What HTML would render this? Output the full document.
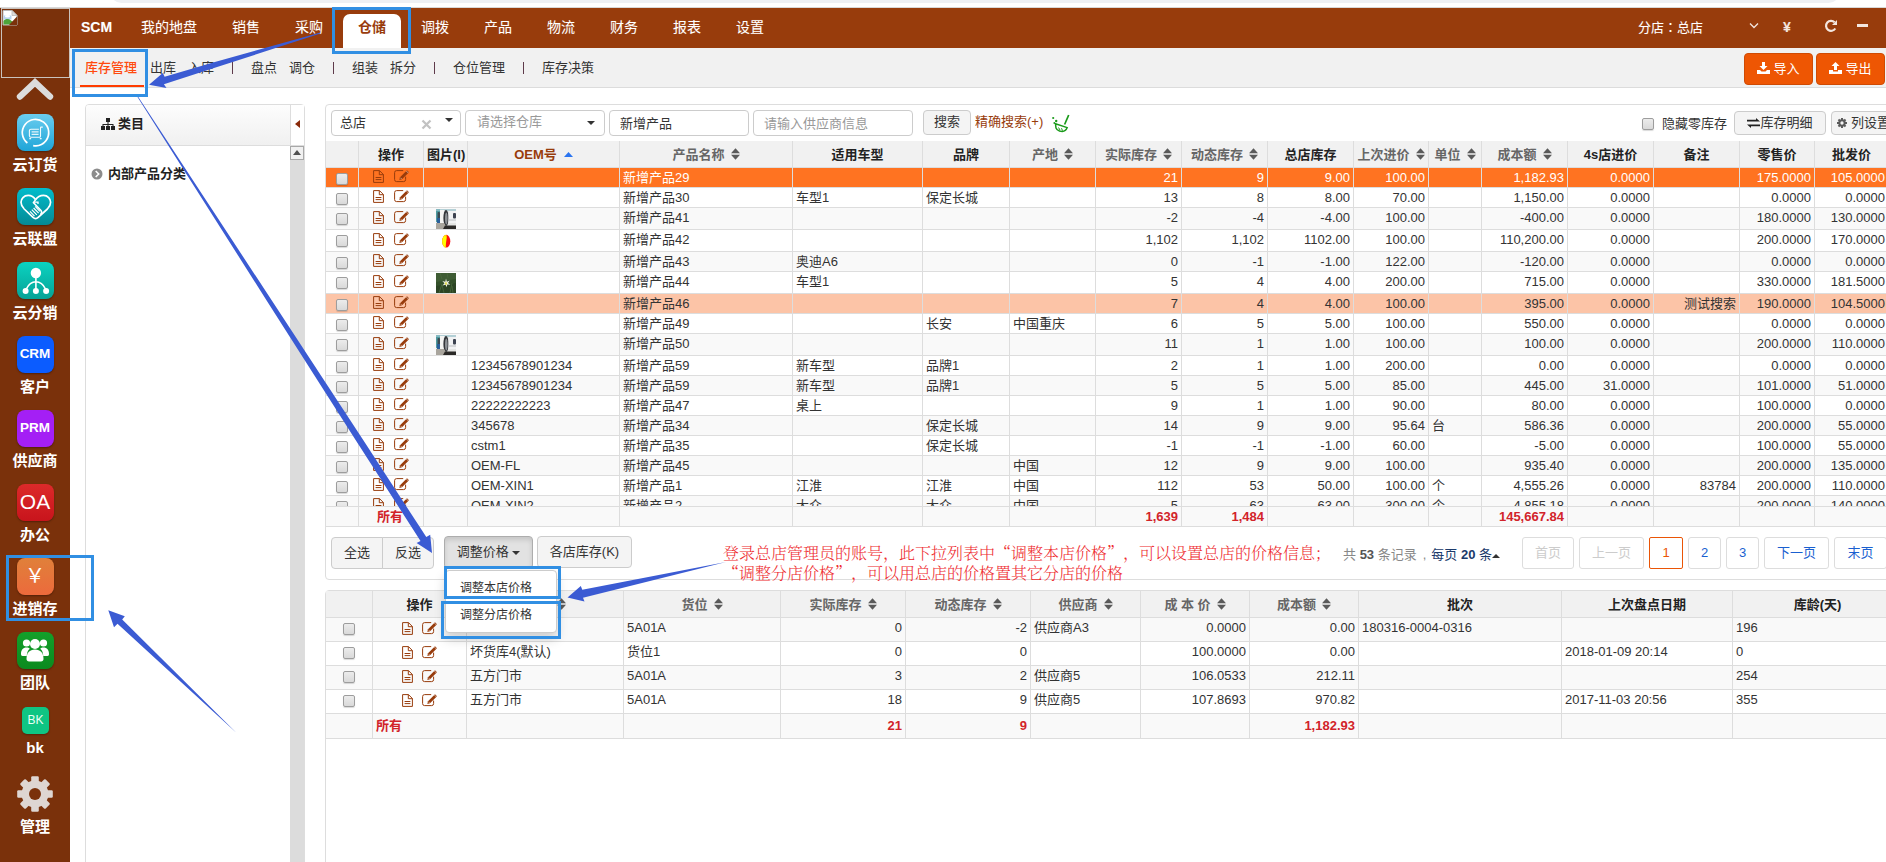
<!DOCTYPE html><html lang="zh-CN"><head><meta charset="utf-8"><title>库存管理</title><style>

*{box-sizing:border-box;}
html,body{margin:0;padding:0;}
body{width:1886px;height:862px;overflow:hidden;background:#fff;position:relative;
 font-family:"Liberation Sans","Noto Sans CJK SC",sans-serif;font-size:13px;color:#333;}
.abs{position:absolute;}
.tc{font-family:"Liberation Sans","Noto Sans CJK TC",sans-serif;}
#topstrip{left:0;top:0;width:1886px;height:8px;background:#fff;}
#addr{left:110px;top:-20px;width:1730px;height:23px;border-radius:12px;background:#eef0f4;}
#topline{left:0;top:7px;width:1886px;height:1px;background:#d8d8d8;}
#side{left:0;top:8px;width:70px;height:854px;background:#7a310b;}
#logo{left:1px;top:8px;width:69px;height:70px;border:1px solid #c9c2bd;background:#7a310b;}
.slabel{left:0;width:70px;text-align:center;color:#fff;font-weight:bold;font-size:15px;line-height:18px;}
.sicon{left:17px;width:37px;height:37px;border-radius:8px;box-shadow:0 1px 2px rgba(0,0,0,.35);overflow:hidden;}
.sicon span{display:block;width:36px;text-align:center;color:#fff;font-weight:bold;}
#nav{left:70px;top:8px;width:1816px;height:40px;background:#983c0c;}
.nv{top:8px;height:40px;line-height:39px;color:#fff;font-size:14px;white-space:nowrap;text-shadow:0 0 1px rgba(255,255,255,.25);}
#navact{left:343px;top:14px;width:58px;height:34px;background:#fff;border-radius:7px 7px 0 0;}
#subnav{left:70px;top:48px;width:1816px;height:40px;background:#f1f1f1;border-bottom:1px solid #dcdcdc;}
.sn{top:48px;height:40px;line-height:40px;font-size:13px;color:#333;white-space:nowrap;}
.sep{color:#7a2a4a;}
.obtn{top:53px;height:32px;width:69px;background:#ee5603;border:1px solid #cf4b04;border-radius:4px;color:#fff;font-size:13px;line-height:30px;text-align:center;white-space:nowrap;}
.bluebox{border:3px solid #318fe3;}
/* left panel */
#tree{left:85px;top:104px;width:220px;height:770px;border:1px solid #ddd;border-radius:4px 4px 0 0;background:#fff;}
#treehd{left:86px;top:105px;width:205px;height:41px;background:linear-gradient(#fdfdfd,#f0f0f0);border-bottom:1px solid #ddd;border-radius:3px 0 0 0;}
#treecol{left:290px;top:105px;width:14px;height:41px;background:#fff;border-left:1px solid #ddd;border-bottom:1px solid #ddd;}
#sbar{left:290px;top:146px;width:14px;height:720px;background:#dcdcdc;}
#sbup{left:290px;top:146px;width:14px;height:14px;background:#f1f1f1;border:1px solid #a8a8a8;}
/* panels */
#p1{left:325px;top:104px;width:1580px;height:476px;border:1px solid #ddd;border-radius:4px;background:#fff;}
#p2{left:325px;top:590px;width:1580px;height:290px;border:1px solid #ddd;border-radius:4px 0 0 0;background:#fff;}
.inp{top:110px;height:26px;border:1px solid #ccc;border-radius:4px;background:#fff;font-size:13px;line-height:24px;padding-left:8px;white-space:nowrap;overflow:hidden;}
.ph{color:#999;}
.gbtn{border:1px solid #ccc;border-radius:4px;background:#f4f4f4;font-size:13px;text-align:center;white-space:nowrap;color:#333;}
.caret{display:inline-block;width:0;height:0;border-left:4px solid transparent;border-right:4px solid transparent;border-top:4px solid #333;vertical-align:middle;}
/* grid */
table.g{border-collapse:separate;border-spacing:0;table-layout:fixed;position:absolute;}
table.g td,table.g th{border-right:1px solid #ddd;border-bottom:1px solid #ddd;padding:0 3px;overflow:hidden;white-space:nowrap;font-size:13px;line-height:19px;vertical-align:middle;}
table.g td{vertical-align:top;}
table.g td.m{vertical-align:middle;}
table.b tr.ft td{padding-top:2px;}
table.g th{background:#f1f1f1;font-weight:bold;color:#222;text-align:center;}
table.g th.s{color:#666;}
table.g td.r{text-align:right;}
table.g td.c{text-align:center;}
table.g tr.odd td{background:#fff;}
table.g tr.even td{background:#f9f9f9;}
table.g tr.sel td{background:#ff7321;color:#fff;}
table.g tr.hov td{background:#fcc4a7;}
table.g tr.ft td{background:#f9f9f9;color:#d2232a;font-weight:bold;}
.cb{display:inline-block;width:12px;height:12px;border:1px solid #9d9d9d;border-radius:2px;background:linear-gradient(#ececec,#d9d9d9);box-shadow:0 1px 1px rgba(0,0,0,.15);vertical-align:middle;}
.si{display:inline-block;width:9px;height:12px;vertical-align:-1.500px;margin-left:6px;}
.ic{display:inline-block;vertical-align:middle;}
.pg{top:537px;height:32px;border:1px solid #ddd;border-radius:3px;background:#fff;font-size:13px;line-height:30px;text-align:center;color:#1a5fd0;white-space:nowrap;}
.pg.dis{color:#ccc;}
.pg.cur{border-color:#ea5506;color:#ea5506;border-radius:2px;}
.note{color:#ee2a2e;font-family:"Liberation Serif","Noto Serif CJK SC",serif;font-size:16px;font-weight:300;white-space:nowrap;line-height:20px;text-spacing-trim:space-all;}
.note i{font-style:normal;font-family:"Noto Serif CJK SC",serif;}

</style></head><body>
<div id="topstrip" class="abs"></div><div id="addr" class="abs"></div><div id="topline" class="abs"></div>
<div id="side" class="abs"></div>
<div id="logo" class="abs"></div>
<svg class="abs" style="left:2px;top:10px" width="16" height="16" viewBox="0 0 16 16">
<path d="M1 0.5h9l5 5v9.5h-14z" fill="#fff" stroke="#b8b8b8" stroke-width="1"/>
<path d="M10 0.5v5h5z" fill="#dcdcdc" stroke="#b8b8b8" stroke-width=".8"/>
<path d="M1.5 5.5h8v4h-8z" fill="#b9d4f0"/>
<ellipse cx="5.5" cy="6.3" rx="2.6" ry="1.2" fill="#fff"/>
<path d="M1.5 14.5v-3.5c2-2.4 5-2.6 7.5-.6l5.5 4.1z" fill="#4da43a"/>
<path d="M7 15 L15 6.5 V15z" fill="#7a310b"/>
</svg>
<svg class="abs" style="left:14px;top:76px" width="42" height="28" viewBox="0 0 42 28">
<path d="M6 20.5 L21 6.5 L36 20.5" fill="none" stroke="#dcdcdc" stroke-width="6.4" stroke-linecap="round" stroke-linejoin="miter"/></svg>
<div class="abs sicon" style="top:114px;background:linear-gradient(#6bcdef,#1fa5d8)">
<svg width="37" height="37" viewBox="0 0 37 37"><circle cx="18.500" cy="18.600" r="13.200" fill="none" stroke="#fff" stroke-width="1.700" stroke-dasharray="76 7" transform="rotate(128 18.500 18.600)"/>
<path d="M25.800 13.100h-1.600c-.5 0-.7.300-.7.800v8.300c0 .6-.4 1-1 1h-8.600c-.9 0-1.500-.6-1.500-1.500v-4.900c0-.9.600-1.500 1.500-1.500h8" fill="none" stroke="#fff" stroke-width="1.100" opacity=".92"/>
<path d="M14.600 17.800h7M14.600 20.400h7" stroke="#fff" stroke-width="1.300" opacity=".85"/><rect x="12.300" y="24" width="1.800" height="1.300" fill="#fff" opacity=".9"/><rect x="22.800" y="24" width="1.800" height="1.300" fill="#fff" opacity=".9"/></svg></div>
<div class="abs slabel" style="top:156px">云订货</div>
<div class="abs sicon" style="top:188px;background:linear-gradient(#02bccb,#058995)">
<svg width="37" height="37" viewBox="0 0 37 37"><path d="M18.600 11.800C16.600 8.600 13.800 7.400 11.200 7.400C6.800 7.400 4 10.800 4 14.300C4 17.500 5.600 19.400 7.200 21L16 29.400C17.500 30.800 19.700 30.800 21.200 29.400L30.400 21C32 19.400 33.600 17.500 33.600 14.300C33.600 10.800 30.800 7.400 26.500 7.400C23.600 7.400 20.600 8.600 18.600 11.800" fill="none" stroke="#fff" stroke-width="1.700" stroke-linejoin="round"/>
<path d="M18.600 11.800L16.400 14.600L24 22.500C25 23.800 24.600 25.500 23.400 26.600" fill="none" stroke="#fff" stroke-width="1.500"/><path d="M17 14.200h4v1.800" fill="none" stroke="#fff" stroke-width="1.300"/>
<path d="M13 23.400l4.500 4.800M14.800 21.600l5 5.200M16.600 20l5 5.200M18.200 18.300l4.700 5" stroke="#fff" stroke-width="1.200"/></svg></div>
<div class="abs slabel" style="top:230px">云联盟</div>
<div class="abs sicon" style="top:262px;background:linear-gradient(#0bd3c1,#05a296)">
<svg width="37" height="37" viewBox="0 0 37 37"><circle cx="18.900" cy="11" r="5.200" fill="#fff"/><path d="M18.900 15v12M9.300 27C11.800 21.600 15.500 19.700 18.900 19.700C22.300 19.700 26 21.600 28.500 27" fill="none" stroke="#fff" stroke-width="1.600"/>
<circle cx="8.600" cy="29" r="3" fill="#fff"/><circle cx="18.900" cy="29" r="3" fill="#fff"/><circle cx="29.100" cy="29" r="3" fill="#fff"/></svg></div>
<div class="abs slabel" style="top:304px">云分销</div>
<div class="abs sicon" style="top:336px;background:#0b5cff"><span style="font-size:13.5px;line-height:36px;letter-spacing:0">CRM</span></div>
<div class="abs slabel" style="top:378px">客户</div>
<div class="abs sicon" style="top:410px;background:#a41ff5"><span style="font-size:13.5px;line-height:36px">PRM</span></div>
<div class="abs slabel" style="top:452px">供应商</div>
<div class="abs sicon" style="top:484px;background:linear-gradient(#dc2a2a,#c8141c)"><span style="font-size:21px;line-height:36px;font-weight:normal">OA</span></div>
<div class="abs slabel" style="top:526px">办公</div>
<div class="abs sicon" style="top:558px;background:linear-gradient(#e0803a,#ec6a3c)"><span style="font-size:20px;line-height:36px;font-weight:normal">￥</span></div>
<div class="abs slabel" style="top:600px">进销存</div>
<div class="abs sicon" style="top:632px;background:linear-gradient(#13a02a,#0b8a1f)">
<svg width="36" height="36" viewBox="0 0 36 36" fill="#fff"><circle cx="9.500" cy="11" r="3.600"/><circle cx="26.500" cy="11" r="3.600"/><circle cx="18" cy="12" r="5"/>
<path d="M4 22c0-4 2-6.500 5.500-6.500 1.500 0 2.500.5 3.300 1.200-2 1.500-3 4-3 7.300H5.500C4.500 24 4 23.200 4 22z"/><path d="M32 22c0-4-2-6.500-5.500-6.500-1.500 0-2.500.5-3.300 1.200 2 1.500 3 4 3 7.300h4.300c1 0 1.500-.8 1.500-2z"/>
<path d="M9.500 27c0-6 3-9.500 8.500-9.500s8.500 3.500 8.500 9.500c0 1.500-1 2.500-2.500 2.500H12c-1.500 0-2.500-1-2.500-2.500z"/></svg></div>
<div class="abs slabel" style="top:674px">团队</div>
<div class="abs" style="left:22px;top:707px;width:27px;height:27px;border-radius:5px;background:#0fc583;color:#eafff6;font-size:12px;line-height:27px;text-align:center;box-shadow:0 1px 2px rgba(0,0,0,.3)">BK</div>
<div class="abs slabel" style="top:739px">bk</div>
<svg class="abs" style="left:17px;top:775px" width="36" height="38" viewBox="0 0 36 38">
<g transform="translate(18 19)" fill="#ded6d2"><circle r="13.400"/>
<rect x="-3.800" y="-17.800" width="7.600" height="8" rx="1.200" transform="rotate(0)"/><rect x="-3.800" y="-17.800" width="7.600" height="8" rx="1.200" transform="rotate(45)"/><rect x="-3.800" y="-17.800" width="7.600" height="8" rx="1.200" transform="rotate(90)"/><rect x="-3.800" y="-17.800" width="7.600" height="8" rx="1.200" transform="rotate(135)"/><rect x="-3.800" y="-17.800" width="7.600" height="8" rx="1.200" transform="rotate(180)"/><rect x="-3.800" y="-17.800" width="7.600" height="8" rx="1.200" transform="rotate(225)"/><rect x="-3.800" y="-17.800" width="7.600" height="8" rx="1.200" transform="rotate(270)"/><rect x="-3.800" y="-17.800" width="7.600" height="8" rx="1.200" transform="rotate(315)"/>
<circle r="6" fill="#7a310b"/></g></svg>
<div class="abs slabel" style="top:818px">管理</div>
<div id="nav" class="abs"></div>
<div id="navact" class="abs"></div>
<div class="abs nv" style="left:81px;font-weight:bold;font-size:14px;">SCM</div>
<div class="abs nv" style="left:141px;">我的地盘</div>
<div class="abs nv" style="left:232px;">销售</div>
<div class="abs nv" style="left:295px;">采购</div>
<div class="abs nv" style="left:421px;">调拨</div>
<div class="abs nv" style="left:484px;">产品</div>
<div class="abs nv" style="left:547px;">物流</div>
<div class="abs nv" style="left:610px;">财务</div>
<div class="abs nv" style="left:673px;">报表</div>
<div class="abs nv" style="left:736px;">设置</div>
<div class="abs nv" style="left:358px;color:#983c0c;text-shadow:none;font-weight:bold">仓储</div>
<div class="abs nv" style="left:1638px;font-size:13px">分店<span class="tc" lang="zh-TW">：</span>总店</div>
<svg class="abs" style="left:1749px;top:22px" width="10" height="8" viewBox="0 0 10 8"><path d="M1 1.500l4 4 4-4" fill="none" stroke="#f3e6df" stroke-width="1.300"/></svg>
<div class="abs nv" style="left:1783px;font-size:14px;font-weight:bold;color:#f3e6df">¥</div>
<svg class="abs" style="left:1824px;top:19px" width="14" height="14" viewBox="0 0 14 14"><path d="M11.300 9.500A5 5 0 1 1 10.600 3.300" fill="none" stroke="#f3e6df" stroke-width="2.200"/><path d="M13 1v5H8z" fill="#f3e6df"/></svg>
<div class="abs" style="left:1857px;top:24px;width:11px;height:3px;background:#f3e6df"></div>
<div id="subnav" class="abs"></div>
<div class="abs sn" style="left:85px;color:#ff4a0e;font-weight:500">库存管理</div>
<div class="abs" style="left:80px;top:85px;width:64px;height:2px;background:#ff3c00"></div>
<div class="abs sn" style="left:150px">出库</div>
<div class="abs sn" style="left:188px">入库</div>
<div class="abs sn" style="left:251px">盘点</div>
<div class="abs sn" style="left:289px">调仓</div>
<div class="abs sn" style="left:352px">组装</div>
<div class="abs sn" style="left:390px">拆分</div>
<div class="abs sn" style="left:453px">仓位管理</div>
<div class="abs sn" style="left:542px">库存决策</div>
<div class="abs" style="left:232px;top:62px;width:1px;height:12px;background:#5e3a4a"></div>
<div class="abs" style="left:333px;top:62px;width:1px;height:12px;background:#5e3a4a"></div>
<div class="abs" style="left:434px;top:62px;width:1px;height:12px;background:#5e3a4a"></div>
<div class="abs" style="left:523px;top:62px;width:1px;height:12px;background:#5e3a4a"></div>
<div class="abs obtn" style="left:1744px"><svg class="ic" width="13" height="12" viewBox="0 0 13 12" style="margin-right:3px;vertical-align:-1px"><path d="M5 0h3v4h2.500L6.500 8 2.500 4H5z" fill="#fff"/><path d="M0 8h3l1.500 1.500h4L10 8h3v4H0z" fill="#fff"/></svg>导入</div>
<div class="abs obtn" style="left:1816px"><svg class="ic" width="13" height="12" viewBox="0 0 13 12" style="margin-right:3px;vertical-align:-1px"><path d="M5 8h3V4h2.500L6.500 0 2.500 4H5z" fill="#fff"/><path d="M0 8h4v1.500h5V8h4v4H0z" fill="#fff"/></svg>导出</div>
<div id="tree" class="abs"></div>
<div id="treehd" class="abs"></div>
<div id="treecol" class="abs"></div>
<div class="abs" style="left:295px;top:120px;width:0;height:0;border-top:4px solid transparent;border-bottom:4px solid transparent;border-right:5px solid #8a2a0a"></div>
<svg class="abs" style="left:101px;top:118px" width="14" height="12" viewBox="0 0 14 12" fill="#222"><rect x="5" y="0" width="4" height="4"/><rect x="0" y="8" width="4" height="4"/><rect x="5" y="8" width="4" height="4"/><rect x="10" y="8" width="4" height="4"/><path d="M6.500 4h1v4h-1zM1.500 6h11v1h-11zM1.500 6h1v2h-1zM11.500 6h1v2h-1z"/></svg>
<div class="abs" style="left:118px;top:114px;line-height:20px;font-weight:bold;font-size:13px;color:#222">类目</div>
<div id="sbar" class="abs"></div><div id="sbup" class="abs"></div>
<div class="abs" style="left:293px;top:150px;width:0;height:0;border-left:4px solid transparent;border-right:4px solid transparent;border-bottom:5px solid #505050"></div>
<svg class="abs" style="left:91px;top:168px" width="12" height="12" viewBox="0 0 12 12"><circle cx="6" cy="6" r="5.500" fill="#8c8c8c"/><path d="M4.700 3l3 3-3 3" fill="none" stroke="#fff" stroke-width="1.600"/></svg>
<div class="abs" style="left:108px;top:164px;line-height:20px;font-weight:bold;font-size:13px;color:#222;white-space:nowrap">内部产品分类</div>
<div id="p1" class="abs"></div>
<div class="abs inp" style="left:331px;width:130px">总店</div>
<svg class="abs" style="left:421px;top:119px" width="11" height="11" viewBox="0 0 11 11"><path d="M1.500 1.500l8 8M9.500 1.500l-8 8" stroke="#c2c2c2" stroke-width="2.300"/></svg>
<div class="abs caret" style="left:445px;top:118px"></div>
<div class="abs inp ph" style="left:465px;width:140px;padding-left:11px;line-height:22px">请选择仓库</div>
<div class="abs caret" style="left:587px;top:121px"></div>
<div class="abs inp" style="left:609px;width:140px;padding-left:10px;line-height:26px">新增产品</div>
<div class="abs inp ph" style="left:753px;width:160px;padding-left:10px;line-height:26px">请输入供应商信息</div>
<div class="abs gbtn" style="left:923px;top:110px;width:48px;height:25px;line-height:22px">搜索</div>
<div class="abs" style="left:975px;top:111px;line-height:22px;color:#983c0c;font-size:13px;white-space:nowrap">精确搜索(+)</div>
<svg class="abs" style="left:1051px;top:113px" width="20" height="20" viewBox="0 0 20 20"><path d="M17.700 2L13.600 11.500" stroke="#1a9a1a" stroke-width="1.700" fill="none"/>
<path d="M4.500 10.800L16.200 14.600C15 17.800 11.800 19 8.500 18C6.800 17.400 5.500 16.500 5 15z" fill="none" stroke="#1a9a1a" stroke-width="1.500"/><path d="M7.500 14.500l1.500 2.500M10.500 15.200l1 2.500" stroke="#1a9a1a" stroke-width="1"/>
<circle cx="2.200" cy="5" r="1.100" fill="#1a9a1a"/><circle cx="5.200" cy="8" r="1.200" fill="#1a9a1a"/><circle cx="3.300" cy="10" r=".9" fill="#1a9a1a"/></svg>
<span class="abs cb" style="left:1642px;top:118px"></span>
<div class="abs" style="left:1662px;top:113px;line-height:22px;font-size:13px;color:#333;white-space:nowrap">隐藏零库存</div>
<div class="abs gbtn" style="left:1734px;top:111px;width:92px;height:24px;line-height:21px"><svg class="ic" width="13" height="10" viewBox="0 0 13 10" style="vertical-align:-0.500px"><path d="M0 1.800h9V0l4 3.600H0zM13 8.200H4V10L0 6.400h13z" fill="#222"/></svg>库存明细</div>
<div class="abs gbtn" style="left:1831px;top:111px;width:70px;height:24px;line-height:21px;text-align:left;padding-left:4px"><svg class="ic" width="10" height="10" viewBox="0 0 12 12" style="vertical-align:-1px;margin-right:4px;margin-left:1px"><g transform="translate(6 6)" fill="#5a5a5a"><circle r="4.400"/><rect x="-1.200" y="-6" width="2.400" height="12"/><rect x="-1.200" y="-6" width="2.400" height="12" transform="rotate(45)"/><rect x="-1.200" y="-6" width="2.400" height="12" transform="rotate(90)"/><rect x="-1.200" y="-6" width="2.400" height="12" transform="rotate(135)"/><circle r="2" fill="#f4f4f4"/></g></svg>列设置</div>
<table class="g" style="left:326px;top:141px;width:1563px"><colgroup><col style="width:33px"><col style="width:65px"><col style="width:44px"><col style="width:152px"><col style="width:173px"><col style="width:130px"><col style="width:87px"><col style="width:86px"><col style="width:86px"><col style="width:86px"><col style="width:86px"><col style="width:75px"><col style="width:53px"><col style="width:86px"><col style="width:86px"><col style="width:86px"><col style="width:75px"><col style="width:74px"></colgroup><tr style="height:27px">
<th></th>
<th>操作</th>
<th>图片(I)</th>
<th style="color:#983c0c">OEM号<svg class="si" style="width:9px;height:5px;vertical-align:2px;margin-left:7px" viewBox="0 0 9 5"><path d="M4.500 0L9 5H0z" fill="#2a74f0"/></svg></th>
<th class="s">产品名称<svg class="si" viewBox="0 0 9 12"><path d="M4.500 0.300L9 5.200H0z" fill="#5a5a5a"/><path d="M4.500 11.700L9 6.800H0z" fill="#5a5a5a"/></svg></th>
<th>适用车型</th>
<th>品牌</th>
<th class="s">产地<svg class="si" viewBox="0 0 9 12"><path d="M4.500 0.300L9 5.200H0z" fill="#5a5a5a"/><path d="M4.500 11.700L9 6.800H0z" fill="#5a5a5a"/></svg></th>
<th class="s">实际库存<svg class="si" viewBox="0 0 9 12"><path d="M4.500 0.300L9 5.200H0z" fill="#5a5a5a"/><path d="M4.500 11.700L9 6.800H0z" fill="#5a5a5a"/></svg></th>
<th class="s">动态库存<svg class="si" viewBox="0 0 9 12"><path d="M4.500 0.300L9 5.200H0z" fill="#5a5a5a"/><path d="M4.500 11.700L9 6.800H0z" fill="#5a5a5a"/></svg></th>
<th>总店库存</th>
<th class="s">上次进价<svg class="si" viewBox="0 0 9 12"><path d="M4.500 0.300L9 5.200H0z" fill="#5a5a5a"/><path d="M4.500 11.700L9 6.800H0z" fill="#5a5a5a"/></svg></th>
<th class="s">单位<svg class="si" viewBox="0 0 9 12"><path d="M4.500 0.300L9 5.200H0z" fill="#5a5a5a"/><path d="M4.500 11.700L9 6.800H0z" fill="#5a5a5a"/></svg></th>
<th class="s">成本额<svg class="si" viewBox="0 0 9 12"><path d="M4.500 0.300L9 5.200H0z" fill="#5a5a5a"/><path d="M4.500 11.700L9 6.800H0z" fill="#5a5a5a"/></svg></th>
<th>4s店进价</th>
<th>备注</th>
<th>零售价</th>
<th>批发价</th>
</tr></table>
<div class="abs" style="left:326px;top:168px;width:1560px;height:338px;overflow:hidden">
<table class="g" style="left:0;top:0;width:1563px"><colgroup><col style="width:33px"><col style="width:65px"><col style="width:44px"><col style="width:152px"><col style="width:173px"><col style="width:130px"><col style="width:87px"><col style="width:86px"><col style="width:86px"><col style="width:86px"><col style="width:86px"><col style="width:75px"><col style="width:53px"><col style="width:86px"><col style="width:86px"><col style="width:86px"><col style="width:75px"><col style="width:74px"></colgroup>
<tr class="sel" style="height:20px">
<td class="c" style="padding:5px 0 0 0;line-height:0"><span class="cb" style="vertical-align:top"></span></td>
<td class="m" style="padding:0 0 0 14px;line-height:0"><span style="position:relative;top:-1px"><svg class="ic" width="11" height="13" viewBox="0 0 11 13"><path d="M0.600 0.600h5.900l3.900 3.900v7.900h-9.800z" fill="none" stroke="#983c0c" stroke-width="1"/><path d="M6.300 0.600v4.100h4.100" fill="none" stroke="#983c0c" stroke-width="1"/><path d="M2.600 7.500h5.800M2.600 9.600h5.800" stroke="#983c0c" stroke-width="1"/></svg><span style="display:inline-block;width:10px"></span><svg class="ic" width="16" height="13" viewBox="0 0 16 13"><path d="M11.600 6.600v3a2 2 0 0 1-2 2h-7a2 2 0 0 1-2-2v-7a2 2 0 0 1 2-2h6.600" fill="none" stroke="#983c0c" stroke-width="1"/><path d="M5.300 10l.7-2.700 7-7 2 2-7 7z" fill="#983c0c"/><path d="M6.400 7.700l1.500 1.500" stroke="#fff" stroke-width=".5"/><path d="M12.300 1l2 2" stroke="#fff" stroke-width=".5"/></svg></span></td>
<td class="c m" style="padding:0;line-height:0"></td>
<td></td><td>新增产品29</td><td></td><td></td><td></td>
<td class="r">21</td>
<td class="r">9</td>
<td class="r">9.00</td>
<td class="r">100.00</td>
<td></td>
<td class="r">1,182.93</td>
<td class="r">0.0000</td>
<td class="r"></td>
<td class="r">175.0000</td>
<td class="r">105.0000</td>
</tr>
<tr class="odd" style="height:20px">
<td class="c" style="padding:5px 0 0 0;line-height:0"><span class="cb" style="vertical-align:top"></span></td>
<td class="m" style="padding:0 0 0 14px;line-height:0"><span style="position:relative;top:-1px"><svg class="ic" width="11" height="13" viewBox="0 0 11 13"><path d="M0.600 0.600h5.900l3.900 3.900v7.900h-9.800z" fill="none" stroke="#983c0c" stroke-width="1"/><path d="M6.300 0.600v4.100h4.100" fill="none" stroke="#983c0c" stroke-width="1"/><path d="M2.600 7.500h5.800M2.600 9.600h5.800" stroke="#983c0c" stroke-width="1"/></svg><span style="display:inline-block;width:10px"></span><svg class="ic" width="16" height="13" viewBox="0 0 16 13"><path d="M11.600 6.600v3a2 2 0 0 1-2 2h-7a2 2 0 0 1-2-2v-7a2 2 0 0 1 2-2h6.600" fill="none" stroke="#983c0c" stroke-width="1"/><path d="M5.300 10l.7-2.700 7-7 2 2-7 7z" fill="#983c0c"/><path d="M6.400 7.700l1.500 1.500" stroke="#fff" stroke-width=".5"/><path d="M12.300 1l2 2" stroke="#fff" stroke-width=".5"/></svg></span></td>
<td class="c m" style="padding:0;line-height:0"></td>
<td></td><td>新增产品30</td><td>车型1</td><td>保定长城</td><td></td>
<td class="r">13</td>
<td class="r">8</td>
<td class="r">8.00</td>
<td class="r">70.00</td>
<td></td>
<td class="r">1,150.00</td>
<td class="r">0.0000</td>
<td class="r"></td>
<td class="r">0.0000</td>
<td class="r">0.0000</td>
</tr>
<tr class="even" style="height:22px">
<td class="c" style="padding:5px 0 0 0;line-height:0"><span class="cb" style="vertical-align:top"></span></td>
<td class="m" style="padding:0 0 0 14px;line-height:0"><span style="position:relative;top:-1px"><svg class="ic" width="11" height="13" viewBox="0 0 11 13"><path d="M0.600 0.600h5.900l3.900 3.900v7.900h-9.800z" fill="none" stroke="#983c0c" stroke-width="1"/><path d="M6.300 0.600v4.100h4.100" fill="none" stroke="#983c0c" stroke-width="1"/><path d="M2.600 7.500h5.800M2.600 9.600h5.800" stroke="#983c0c" stroke-width="1"/></svg><span style="display:inline-block;width:10px"></span><svg class="ic" width="16" height="13" viewBox="0 0 16 13"><path d="M11.600 6.600v3a2 2 0 0 1-2 2h-7a2 2 0 0 1-2-2v-7a2 2 0 0 1 2-2h6.600" fill="none" stroke="#983c0c" stroke-width="1"/><path d="M5.300 10l.7-2.700 7-7 2 2-7 7z" fill="#983c0c"/><path d="M6.400 7.700l1.500 1.500" stroke="#fff" stroke-width=".5"/><path d="M12.300 1l2 2" stroke="#fff" stroke-width=".5"/></svg></span></td>
<td class="c m" style="padding:0;line-height:0"><svg class="ic" width="20" height="20" viewBox="0 0 20 20"><rect width="20" height="20" fill="#e4e5e3"/><rect x="0" y="0" width="4" height="13" fill="#4f9aa0"/><rect x="0" y="0" width="20" height="2" fill="#9ec6cf" opacity=".7"/><rect x="1.500" y="3" width="2.500" height="9" rx="1" fill="#3b4a52"/><rect x="1" y="9" width="3" height="5" fill="#2a5f9a"/><rect x="4" y="1" width="4.500" height="13" fill="#f4f4f2"/><ellipse cx="10" cy="9" rx="2.600" ry="8" fill="#34363a"/><ellipse cx="10.300" cy="9.500" rx="1.300" ry="6" fill="#8c9094"/><rect x="12.500" y="2" width="7.500" height="12" fill="#f1f2f3"/><rect x="17" y="4" width="3" height="5.500" rx="1" fill="#3c4250"/><rect x="12.500" y="10.500" width="7.500" height="1" fill="#b9bcc0"/><path d="M0 14h8l2 3h10v3H0z" fill="#a9a59d"/><path d="M9 16.500h11V20H7z" fill="#2b2927"/></svg></td>
<td></td><td>新增产品41</td><td></td><td></td><td></td>
<td class="r">-2</td>
<td class="r">-4</td>
<td class="r">-4.00</td>
<td class="r">100.00</td>
<td></td>
<td class="r">-400.00</td>
<td class="r">0.0000</td>
<td class="r"></td>
<td class="r">180.0000</td>
<td class="r">130.0000</td>
</tr>
<tr class="odd" style="height:22px">
<td class="c" style="padding:5px 0 0 0;line-height:0"><span class="cb" style="vertical-align:top"></span></td>
<td class="m" style="padding:0 0 0 14px;line-height:0"><span style="position:relative;top:-1px"><svg class="ic" width="11" height="13" viewBox="0 0 11 13"><path d="M0.600 0.600h5.900l3.900 3.900v7.900h-9.800z" fill="none" stroke="#983c0c" stroke-width="1"/><path d="M6.300 0.600v4.100h4.100" fill="none" stroke="#983c0c" stroke-width="1"/><path d="M2.600 7.500h5.800M2.600 9.600h5.800" stroke="#983c0c" stroke-width="1"/></svg><span style="display:inline-block;width:10px"></span><svg class="ic" width="16" height="13" viewBox="0 0 16 13"><path d="M11.600 6.600v3a2 2 0 0 1-2 2h-7a2 2 0 0 1-2-2v-7a2 2 0 0 1 2-2h6.600" fill="none" stroke="#983c0c" stroke-width="1"/><path d="M5.300 10l.7-2.700 7-7 2 2-7 7z" fill="#983c0c"/><path d="M6.400 7.700l1.500 1.500" stroke="#fff" stroke-width=".5"/><path d="M12.300 1l2 2" stroke="#fff" stroke-width=".5"/></svg></span></td>
<td class="c m" style="padding:0;line-height:0"><svg class="ic" width="20" height="20" viewBox="0 0 20 20"><rect width="20" height="20" fill="#fff"/><ellipse cx="10.200" cy="10.200" rx="4.100" ry="6.400" fill="#ff1010"/><path d="M10.200 3.800A4.100 6.400 0 0 0 10.200 16.600C8.600 15 8.600 5.500 10.200 3.800z" fill="#ffff00"/><path d="M10.200 3.800C11.800 6 9 13 10.200 16.600C8 14 8 6 10.200 3.800z" fill="#ffff00"/></svg></td>
<td></td><td>新增产品42</td><td></td><td></td><td></td>
<td class="r">1,102</td>
<td class="r">1,102</td>
<td class="r">1102.00</td>
<td class="r">100.00</td>
<td></td>
<td class="r">110,200.00</td>
<td class="r">0.0000</td>
<td class="r"></td>
<td class="r">200.0000</td>
<td class="r">170.0000</td>
</tr>
<tr class="even" style="height:20px">
<td class="c" style="padding:5px 0 0 0;line-height:0"><span class="cb" style="vertical-align:top"></span></td>
<td class="m" style="padding:0 0 0 14px;line-height:0"><span style="position:relative;top:-1px"><svg class="ic" width="11" height="13" viewBox="0 0 11 13"><path d="M0.600 0.600h5.900l3.900 3.900v7.900h-9.800z" fill="none" stroke="#983c0c" stroke-width="1"/><path d="M6.300 0.600v4.100h4.100" fill="none" stroke="#983c0c" stroke-width="1"/><path d="M2.600 7.500h5.800M2.600 9.600h5.800" stroke="#983c0c" stroke-width="1"/></svg><span style="display:inline-block;width:10px"></span><svg class="ic" width="16" height="13" viewBox="0 0 16 13"><path d="M11.600 6.600v3a2 2 0 0 1-2 2h-7a2 2 0 0 1-2-2v-7a2 2 0 0 1 2-2h6.600" fill="none" stroke="#983c0c" stroke-width="1"/><path d="M5.300 10l.7-2.700 7-7 2 2-7 7z" fill="#983c0c"/><path d="M6.400 7.700l1.500 1.500" stroke="#fff" stroke-width=".5"/><path d="M12.300 1l2 2" stroke="#fff" stroke-width=".5"/></svg></span></td>
<td class="c m" style="padding:0;line-height:0"></td>
<td></td><td>新增产品43</td><td>奥迪A6</td><td></td><td></td>
<td class="r">0</td>
<td class="r">-1</td>
<td class="r">-1.00</td>
<td class="r">122.00</td>
<td></td>
<td class="r">-120.00</td>
<td class="r">0.0000</td>
<td class="r"></td>
<td class="r">0.0000</td>
<td class="r">0.0000</td>
</tr>
<tr class="odd" style="height:22px">
<td class="c" style="padding:5px 0 0 0;line-height:0"><span class="cb" style="vertical-align:top"></span></td>
<td class="m" style="padding:0 0 0 14px;line-height:0"><span style="position:relative;top:-1px"><svg class="ic" width="11" height="13" viewBox="0 0 11 13"><path d="M0.600 0.600h5.900l3.900 3.900v7.900h-9.800z" fill="none" stroke="#983c0c" stroke-width="1"/><path d="M6.300 0.600v4.100h4.100" fill="none" stroke="#983c0c" stroke-width="1"/><path d="M2.600 7.500h5.800M2.600 9.600h5.800" stroke="#983c0c" stroke-width="1"/></svg><span style="display:inline-block;width:10px"></span><svg class="ic" width="16" height="13" viewBox="0 0 16 13"><path d="M11.600 6.600v3a2 2 0 0 1-2 2h-7a2 2 0 0 1-2-2v-7a2 2 0 0 1 2-2h6.600" fill="none" stroke="#983c0c" stroke-width="1"/><path d="M5.300 10l.7-2.700 7-7 2 2-7 7z" fill="#983c0c"/><path d="M6.400 7.700l1.500 1.500" stroke="#fff" stroke-width=".5"/><path d="M12.300 1l2 2" stroke="#fff" stroke-width=".5"/></svg></span></td>
<td class="c m" style="padding:0;line-height:0"><svg class="ic" width="20" height="20" viewBox="0 0 20 20"><rect width="20" height="20" fill="#34502a"/><path d="M0 0h20v6L0 9z" fill="#3f5c34"/><path d="M0 13l20-3v10H0z" fill="#2c4424"/><path d="M3 20l3-9M8 20l-2-8M14 20l2-10M17 20l-1-7M11 0l1 5M4 0l2 6" stroke="#4a6a3c" stroke-width=".8"/><path d="M10 5.500l.9 3.300 2.800-1.300-1.700 2.600 2.400 1.700-3.200-.2-.4 2.700-1.300-2.500-3 .8 2-2.300-2.200-2.400 3 .8z" fill="#eef0e6"/><ellipse cx="10" cy="10.500" rx="1" ry="1.500" fill="#e2d84a"/></svg></td>
<td></td><td>新增产品44</td><td>车型1</td><td></td><td></td>
<td class="r">5</td>
<td class="r">4</td>
<td class="r">4.00</td>
<td class="r">200.00</td>
<td></td>
<td class="r">715.00</td>
<td class="r">0.0000</td>
<td class="r"></td>
<td class="r">330.0000</td>
<td class="r">181.5000</td>
</tr>
<tr class="hov" style="height:20px">
<td class="c" style="padding:5px 0 0 0;line-height:0"><span class="cb" style="vertical-align:top"></span></td>
<td class="m" style="padding:0 0 0 14px;line-height:0"><span style="position:relative;top:-1px"><svg class="ic" width="11" height="13" viewBox="0 0 11 13"><path d="M0.600 0.600h5.900l3.900 3.900v7.900h-9.800z" fill="none" stroke="#983c0c" stroke-width="1"/><path d="M6.300 0.600v4.100h4.100" fill="none" stroke="#983c0c" stroke-width="1"/><path d="M2.600 7.500h5.800M2.600 9.600h5.800" stroke="#983c0c" stroke-width="1"/></svg><span style="display:inline-block;width:10px"></span><svg class="ic" width="16" height="13" viewBox="0 0 16 13"><path d="M11.600 6.600v3a2 2 0 0 1-2 2h-7a2 2 0 0 1-2-2v-7a2 2 0 0 1 2-2h6.600" fill="none" stroke="#983c0c" stroke-width="1"/><path d="M5.300 10l.7-2.700 7-7 2 2-7 7z" fill="#983c0c"/><path d="M6.400 7.700l1.500 1.500" stroke="#fff" stroke-width=".5"/><path d="M12.300 1l2 2" stroke="#fff" stroke-width=".5"/></svg></span></td>
<td class="c m" style="padding:0;line-height:0"></td>
<td></td><td>新增产品46</td><td></td><td></td><td></td>
<td class="r">7</td>
<td class="r">4</td>
<td class="r">4.00</td>
<td class="r">100.00</td>
<td></td>
<td class="r">395.00</td>
<td class="r">0.0000</td>
<td class="r">测试搜索</td>
<td class="r">190.0000</td>
<td class="r">104.5000</td>
</tr>
<tr class="odd" style="height:20px">
<td class="c" style="padding:5px 0 0 0;line-height:0"><span class="cb" style="vertical-align:top"></span></td>
<td class="m" style="padding:0 0 0 14px;line-height:0"><span style="position:relative;top:-1px"><svg class="ic" width="11" height="13" viewBox="0 0 11 13"><path d="M0.600 0.600h5.900l3.900 3.900v7.900h-9.800z" fill="none" stroke="#983c0c" stroke-width="1"/><path d="M6.300 0.600v4.100h4.100" fill="none" stroke="#983c0c" stroke-width="1"/><path d="M2.600 7.500h5.800M2.600 9.600h5.800" stroke="#983c0c" stroke-width="1"/></svg><span style="display:inline-block;width:10px"></span><svg class="ic" width="16" height="13" viewBox="0 0 16 13"><path d="M11.600 6.600v3a2 2 0 0 1-2 2h-7a2 2 0 0 1-2-2v-7a2 2 0 0 1 2-2h6.600" fill="none" stroke="#983c0c" stroke-width="1"/><path d="M5.300 10l.7-2.700 7-7 2 2-7 7z" fill="#983c0c"/><path d="M6.400 7.700l1.500 1.500" stroke="#fff" stroke-width=".5"/><path d="M12.300 1l2 2" stroke="#fff" stroke-width=".5"/></svg></span></td>
<td class="c m" style="padding:0;line-height:0"></td>
<td></td><td>新增产品49</td><td></td><td>长安</td><td>中国重庆</td>
<td class="r">6</td>
<td class="r">5</td>
<td class="r">5.00</td>
<td class="r">100.00</td>
<td></td>
<td class="r">550.00</td>
<td class="r">0.0000</td>
<td class="r"></td>
<td class="r">0.0000</td>
<td class="r">0.0000</td>
</tr>
<tr class="even" style="height:22px">
<td class="c" style="padding:5px 0 0 0;line-height:0"><span class="cb" style="vertical-align:top"></span></td>
<td class="m" style="padding:0 0 0 14px;line-height:0"><span style="position:relative;top:-1px"><svg class="ic" width="11" height="13" viewBox="0 0 11 13"><path d="M0.600 0.600h5.900l3.900 3.900v7.900h-9.800z" fill="none" stroke="#983c0c" stroke-width="1"/><path d="M6.300 0.600v4.100h4.100" fill="none" stroke="#983c0c" stroke-width="1"/><path d="M2.600 7.500h5.800M2.600 9.600h5.800" stroke="#983c0c" stroke-width="1"/></svg><span style="display:inline-block;width:10px"></span><svg class="ic" width="16" height="13" viewBox="0 0 16 13"><path d="M11.600 6.600v3a2 2 0 0 1-2 2h-7a2 2 0 0 1-2-2v-7a2 2 0 0 1 2-2h6.600" fill="none" stroke="#983c0c" stroke-width="1"/><path d="M5.300 10l.7-2.700 7-7 2 2-7 7z" fill="#983c0c"/><path d="M6.400 7.700l1.500 1.500" stroke="#fff" stroke-width=".5"/><path d="M12.300 1l2 2" stroke="#fff" stroke-width=".5"/></svg></span></td>
<td class="c m" style="padding:0;line-height:0"><svg class="ic" width="20" height="20" viewBox="0 0 20 20"><rect width="20" height="20" fill="#e4e5e3"/><rect x="0" y="0" width="4" height="13" fill="#4f9aa0"/><rect x="0" y="0" width="20" height="2" fill="#9ec6cf" opacity=".7"/><rect x="1.500" y="3" width="2.500" height="9" rx="1" fill="#3b4a52"/><rect x="1" y="9" width="3" height="5" fill="#2a5f9a"/><rect x="4" y="1" width="4.500" height="13" fill="#f4f4f2"/><ellipse cx="10" cy="9" rx="2.600" ry="8" fill="#34363a"/><ellipse cx="10.300" cy="9.500" rx="1.300" ry="6" fill="#8c9094"/><rect x="12.500" y="2" width="7.500" height="12" fill="#f1f2f3"/><rect x="17" y="4" width="3" height="5.500" rx="1" fill="#3c4250"/><rect x="12.500" y="10.500" width="7.500" height="1" fill="#b9bcc0"/><path d="M0 14h8l2 3h10v3H0z" fill="#a9a59d"/><path d="M9 16.500h11V20H7z" fill="#2b2927"/></svg></td>
<td></td><td>新增产品50</td><td></td><td></td><td></td>
<td class="r">11</td>
<td class="r">1</td>
<td class="r">1.00</td>
<td class="r">100.00</td>
<td></td>
<td class="r">100.00</td>
<td class="r">0.0000</td>
<td class="r"></td>
<td class="r">200.0000</td>
<td class="r">110.0000</td>
</tr>
<tr class="odd" style="height:20px">
<td class="c" style="padding:5px 0 0 0;line-height:0"><span class="cb" style="vertical-align:top"></span></td>
<td class="m" style="padding:0 0 0 14px;line-height:0"><span style="position:relative;top:-1px"><svg class="ic" width="11" height="13" viewBox="0 0 11 13"><path d="M0.600 0.600h5.900l3.900 3.900v7.900h-9.800z" fill="none" stroke="#983c0c" stroke-width="1"/><path d="M6.300 0.600v4.100h4.100" fill="none" stroke="#983c0c" stroke-width="1"/><path d="M2.600 7.500h5.800M2.600 9.600h5.800" stroke="#983c0c" stroke-width="1"/></svg><span style="display:inline-block;width:10px"></span><svg class="ic" width="16" height="13" viewBox="0 0 16 13"><path d="M11.600 6.600v3a2 2 0 0 1-2 2h-7a2 2 0 0 1-2-2v-7a2 2 0 0 1 2-2h6.600" fill="none" stroke="#983c0c" stroke-width="1"/><path d="M5.300 10l.7-2.700 7-7 2 2-7 7z" fill="#983c0c"/><path d="M6.400 7.700l1.500 1.500" stroke="#fff" stroke-width=".5"/><path d="M12.300 1l2 2" stroke="#fff" stroke-width=".5"/></svg></span></td>
<td class="c m" style="padding:0;line-height:0"></td>
<td>12345678901234</td><td>新增产品59</td><td>新车型</td><td>品牌1</td><td></td>
<td class="r">2</td>
<td class="r">1</td>
<td class="r">1.00</td>
<td class="r">200.00</td>
<td></td>
<td class="r">0.00</td>
<td class="r">0.0000</td>
<td class="r"></td>
<td class="r">0.0000</td>
<td class="r">0.0000</td>
</tr>
<tr class="even" style="height:20px">
<td class="c" style="padding:5px 0 0 0;line-height:0"><span class="cb" style="vertical-align:top"></span></td>
<td class="m" style="padding:0 0 0 14px;line-height:0"><span style="position:relative;top:-1px"><svg class="ic" width="11" height="13" viewBox="0 0 11 13"><path d="M0.600 0.600h5.900l3.900 3.900v7.900h-9.800z" fill="none" stroke="#983c0c" stroke-width="1"/><path d="M6.300 0.600v4.100h4.100" fill="none" stroke="#983c0c" stroke-width="1"/><path d="M2.600 7.500h5.800M2.600 9.600h5.800" stroke="#983c0c" stroke-width="1"/></svg><span style="display:inline-block;width:10px"></span><svg class="ic" width="16" height="13" viewBox="0 0 16 13"><path d="M11.600 6.600v3a2 2 0 0 1-2 2h-7a2 2 0 0 1-2-2v-7a2 2 0 0 1 2-2h6.600" fill="none" stroke="#983c0c" stroke-width="1"/><path d="M5.300 10l.7-2.700 7-7 2 2-7 7z" fill="#983c0c"/><path d="M6.400 7.700l1.500 1.500" stroke="#fff" stroke-width=".5"/><path d="M12.300 1l2 2" stroke="#fff" stroke-width=".5"/></svg></span></td>
<td class="c m" style="padding:0;line-height:0"></td>
<td>12345678901234</td><td>新增产品59</td><td>新车型</td><td>品牌1</td><td></td>
<td class="r">5</td>
<td class="r">5</td>
<td class="r">5.00</td>
<td class="r">85.00</td>
<td></td>
<td class="r">445.00</td>
<td class="r">31.0000</td>
<td class="r"></td>
<td class="r">101.0000</td>
<td class="r">51.0000</td>
</tr>
<tr class="odd" style="height:20px">
<td class="c" style="padding:5px 0 0 0;line-height:0"><span class="cb" style="vertical-align:top"></span></td>
<td class="m" style="padding:0 0 0 14px;line-height:0"><span style="position:relative;top:-1px"><svg class="ic" width="11" height="13" viewBox="0 0 11 13"><path d="M0.600 0.600h5.900l3.900 3.900v7.900h-9.800z" fill="none" stroke="#983c0c" stroke-width="1"/><path d="M6.300 0.600v4.100h4.100" fill="none" stroke="#983c0c" stroke-width="1"/><path d="M2.600 7.500h5.800M2.600 9.600h5.800" stroke="#983c0c" stroke-width="1"/></svg><span style="display:inline-block;width:10px"></span><svg class="ic" width="16" height="13" viewBox="0 0 16 13"><path d="M11.600 6.600v3a2 2 0 0 1-2 2h-7a2 2 0 0 1-2-2v-7a2 2 0 0 1 2-2h6.600" fill="none" stroke="#983c0c" stroke-width="1"/><path d="M5.300 10l.7-2.700 7-7 2 2-7 7z" fill="#983c0c"/><path d="M6.400 7.700l1.500 1.500" stroke="#fff" stroke-width=".5"/><path d="M12.300 1l2 2" stroke="#fff" stroke-width=".5"/></svg></span></td>
<td class="c m" style="padding:0;line-height:0"></td>
<td>22222222223</td><td>新增产品47</td><td>桌上</td><td></td><td></td>
<td class="r">9</td>
<td class="r">1</td>
<td class="r">1.00</td>
<td class="r">90.00</td>
<td></td>
<td class="r">80.00</td>
<td class="r">0.0000</td>
<td class="r"></td>
<td class="r">100.0000</td>
<td class="r">0.0000</td>
</tr>
<tr class="even" style="height:20px">
<td class="c" style="padding:5px 0 0 0;line-height:0"><span class="cb" style="vertical-align:top"></span></td>
<td class="m" style="padding:0 0 0 14px;line-height:0"><span style="position:relative;top:-1px"><svg class="ic" width="11" height="13" viewBox="0 0 11 13"><path d="M0.600 0.600h5.900l3.900 3.900v7.900h-9.800z" fill="none" stroke="#983c0c" stroke-width="1"/><path d="M6.300 0.600v4.100h4.100" fill="none" stroke="#983c0c" stroke-width="1"/><path d="M2.600 7.500h5.800M2.600 9.600h5.800" stroke="#983c0c" stroke-width="1"/></svg><span style="display:inline-block;width:10px"></span><svg class="ic" width="16" height="13" viewBox="0 0 16 13"><path d="M11.600 6.600v3a2 2 0 0 1-2 2h-7a2 2 0 0 1-2-2v-7a2 2 0 0 1 2-2h6.600" fill="none" stroke="#983c0c" stroke-width="1"/><path d="M5.300 10l.7-2.700 7-7 2 2-7 7z" fill="#983c0c"/><path d="M6.400 7.700l1.500 1.500" stroke="#fff" stroke-width=".5"/><path d="M12.300 1l2 2" stroke="#fff" stroke-width=".5"/></svg></span></td>
<td class="c m" style="padding:0;line-height:0"></td>
<td>345678</td><td>新增产品34</td><td></td><td>保定长城</td><td></td>
<td class="r">14</td>
<td class="r">9</td>
<td class="r">9.00</td>
<td class="r">95.64</td>
<td>台</td>
<td class="r">586.36</td>
<td class="r">0.0000</td>
<td class="r"></td>
<td class="r">200.0000</td>
<td class="r">55.0000</td>
</tr>
<tr class="odd" style="height:20px">
<td class="c" style="padding:5px 0 0 0;line-height:0"><span class="cb" style="vertical-align:top"></span></td>
<td class="m" style="padding:0 0 0 14px;line-height:0"><span style="position:relative;top:-1px"><svg class="ic" width="11" height="13" viewBox="0 0 11 13"><path d="M0.600 0.600h5.900l3.900 3.900v7.900h-9.800z" fill="none" stroke="#983c0c" stroke-width="1"/><path d="M6.300 0.600v4.100h4.100" fill="none" stroke="#983c0c" stroke-width="1"/><path d="M2.600 7.500h5.800M2.600 9.600h5.800" stroke="#983c0c" stroke-width="1"/></svg><span style="display:inline-block;width:10px"></span><svg class="ic" width="16" height="13" viewBox="0 0 16 13"><path d="M11.600 6.600v3a2 2 0 0 1-2 2h-7a2 2 0 0 1-2-2v-7a2 2 0 0 1 2-2h6.600" fill="none" stroke="#983c0c" stroke-width="1"/><path d="M5.300 10l.7-2.700 7-7 2 2-7 7z" fill="#983c0c"/><path d="M6.400 7.700l1.500 1.500" stroke="#fff" stroke-width=".5"/><path d="M12.300 1l2 2" stroke="#fff" stroke-width=".5"/></svg></span></td>
<td class="c m" style="padding:0;line-height:0"></td>
<td>cstm1</td><td>新增产品35</td><td></td><td>保定长城</td><td></td>
<td class="r">-1</td>
<td class="r">-1</td>
<td class="r">-1.00</td>
<td class="r">60.00</td>
<td></td>
<td class="r">-5.00</td>
<td class="r">0.0000</td>
<td class="r"></td>
<td class="r">100.0000</td>
<td class="r">55.0000</td>
</tr>
<tr class="even" style="height:20px">
<td class="c" style="padding:5px 0 0 0;line-height:0"><span class="cb" style="vertical-align:top"></span></td>
<td class="m" style="padding:0 0 0 14px;line-height:0"><span style="position:relative;top:-1px"><svg class="ic" width="11" height="13" viewBox="0 0 11 13"><path d="M0.600 0.600h5.900l3.900 3.900v7.900h-9.800z" fill="none" stroke="#983c0c" stroke-width="1"/><path d="M6.300 0.600v4.100h4.100" fill="none" stroke="#983c0c" stroke-width="1"/><path d="M2.600 7.500h5.800M2.600 9.600h5.800" stroke="#983c0c" stroke-width="1"/></svg><span style="display:inline-block;width:10px"></span><svg class="ic" width="16" height="13" viewBox="0 0 16 13"><path d="M11.600 6.600v3a2 2 0 0 1-2 2h-7a2 2 0 0 1-2-2v-7a2 2 0 0 1 2-2h6.600" fill="none" stroke="#983c0c" stroke-width="1"/><path d="M5.300 10l.7-2.700 7-7 2 2-7 7z" fill="#983c0c"/><path d="M6.400 7.700l1.500 1.500" stroke="#fff" stroke-width=".5"/><path d="M12.300 1l2 2" stroke="#fff" stroke-width=".5"/></svg></span></td>
<td class="c m" style="padding:0;line-height:0"></td>
<td>OEM-FL</td><td>新增产品45</td><td></td><td></td><td>中国</td>
<td class="r">12</td>
<td class="r">9</td>
<td class="r">9.00</td>
<td class="r">100.00</td>
<td></td>
<td class="r">935.40</td>
<td class="r">0.0000</td>
<td class="r"></td>
<td class="r">200.0000</td>
<td class="r">135.0000</td>
</tr>
<tr class="odd" style="height:20px">
<td class="c" style="padding:5px 0 0 0;line-height:0"><span class="cb" style="vertical-align:top"></span></td>
<td class="m" style="padding:0 0 0 14px;line-height:0"><span style="position:relative;top:-1px"><svg class="ic" width="11" height="13" viewBox="0 0 11 13"><path d="M0.600 0.600h5.900l3.900 3.900v7.900h-9.800z" fill="none" stroke="#983c0c" stroke-width="1"/><path d="M6.300 0.600v4.100h4.100" fill="none" stroke="#983c0c" stroke-width="1"/><path d="M2.600 7.500h5.800M2.600 9.600h5.800" stroke="#983c0c" stroke-width="1"/></svg><span style="display:inline-block;width:10px"></span><svg class="ic" width="16" height="13" viewBox="0 0 16 13"><path d="M11.600 6.600v3a2 2 0 0 1-2 2h-7a2 2 0 0 1-2-2v-7a2 2 0 0 1 2-2h6.600" fill="none" stroke="#983c0c" stroke-width="1"/><path d="M5.300 10l.7-2.700 7-7 2 2-7 7z" fill="#983c0c"/><path d="M6.400 7.700l1.500 1.500" stroke="#fff" stroke-width=".5"/><path d="M12.300 1l2 2" stroke="#fff" stroke-width=".5"/></svg></span></td>
<td class="c m" style="padding:0;line-height:0"></td>
<td>OEM-XIN1</td><td>新增产品1</td><td>江淮</td><td>江淮</td><td>中国</td>
<td class="r">112</td>
<td class="r">53</td>
<td class="r">50.00</td>
<td class="r">100.00</td>
<td>个</td>
<td class="r">4,555.26</td>
<td class="r">0.0000</td>
<td class="r">83784</td>
<td class="r">200.0000</td>
<td class="r">110.0000</td>
</tr>
<tr class="even" style="height:20px">
<td class="c" style="padding:5px 0 0 0;line-height:0"><span class="cb" style="vertical-align:top"></span></td>
<td class="m" style="padding:0 0 0 14px;line-height:0"><span style="position:relative;top:-1px"><svg class="ic" width="11" height="13" viewBox="0 0 11 13"><path d="M0.600 0.600h5.900l3.900 3.900v7.900h-9.800z" fill="none" stroke="#983c0c" stroke-width="1"/><path d="M6.300 0.600v4.100h4.100" fill="none" stroke="#983c0c" stroke-width="1"/><path d="M2.600 7.500h5.800M2.600 9.600h5.800" stroke="#983c0c" stroke-width="1"/></svg><span style="display:inline-block;width:10px"></span><svg class="ic" width="16" height="13" viewBox="0 0 16 13"><path d="M11.600 6.600v3a2 2 0 0 1-2 2h-7a2 2 0 0 1-2-2v-7a2 2 0 0 1 2-2h6.600" fill="none" stroke="#983c0c" stroke-width="1"/><path d="M5.300 10l.7-2.700 7-7 2 2-7 7z" fill="#983c0c"/><path d="M6.400 7.700l1.500 1.500" stroke="#fff" stroke-width=".5"/><path d="M12.300 1l2 2" stroke="#fff" stroke-width=".5"/></svg></span></td>
<td class="c m" style="padding:0;line-height:0"></td>
<td>OEM-XIN2</td><td>新增产品2</td><td>大众</td><td>大众</td><td>中国</td>
<td class="r">5</td>
<td class="r">63</td>
<td class="r">63.00</td>
<td class="r">300.00</td>
<td>个</td>
<td class="r">4,855.18</td>
<td class="r">0.0000</td>
<td class="r"></td>
<td class="r">200.0000</td>
<td class="r">140.0000</td>
</tr>
</table></div>
<table class="g" style="left:326px;top:506px;width:1563px"><colgroup><col style="width:33px"><col style="width:65px"><col style="width:44px"><col style="width:152px"><col style="width:173px"><col style="width:130px"><col style="width:87px"><col style="width:86px"><col style="width:86px"><col style="width:86px"><col style="width:86px"><col style="width:75px"><col style="width:53px"><col style="width:86px"><col style="width:86px"><col style="width:86px"><col style="width:75px"><col style="width:74px"></colgroup><tr class="ft" style="height:21px">
<td style="border-top:1px solid #ddd"></td>
<td style="border-top:1px solid #ddd"><span style="padding-left:15px">所有</span></td>
<td style="border-top:1px solid #ddd"></td>
<td style="border-top:1px solid #ddd"></td>
<td style="border-top:1px solid #ddd"></td>
<td style="border-top:1px solid #ddd"></td>
<td style="border-top:1px solid #ddd"></td>
<td style="border-top:1px solid #ddd"></td>
<td class="r" style="border-top:1px solid #ddd">1,639</td>
<td class="r" style="border-top:1px solid #ddd">1,484</td>
<td class="r" style="border-top:1px solid #ddd"></td>
<td class="r" style="border-top:1px solid #ddd"></td>
<td class="r" style="border-top:1px solid #ddd"></td>
<td class="r" style="border-top:1px solid #ddd">145,667.84</td>
<td class="r" style="border-top:1px solid #ddd"></td>
<td class="r" style="border-top:1px solid #ddd"></td>
<td class="r" style="border-top:1px solid #ddd"></td>
<td class="r" style="border-top:1px solid #ddd"></td>
</tr></table>
<div class="abs gbtn" style="left:331px;top:537px;width:52px;height:32px;line-height:30px;border-radius:4px 0 0 4px">全选</div>
<div class="abs gbtn" style="left:382px;top:537px;width:52px;height:32px;line-height:30px;border-radius:0 4px 4px 0">反选</div>
<div class="abs gbtn" style="left:444px;top:536px;width:89px;height:33px;line-height:29px;background:#e2e2e2;border-color:#adadad;box-shadow:inset 0 3px 5px rgba(0,0,0,.125)">调整价格 <span class="caret" style="vertical-align:1px"></span></div>
<div class="abs gbtn" style="left:537px;top:536px;width:95px;height:32px;line-height:29px">各店库存(K)</div>
<div class="abs" style="left:1343px;top:545px;line-height:20px;font-size:13px;color:#888;white-space:nowrap">共 <b style="color:#555">53</b> 条记录<span style="padding:0 5px 0 6px">,</span><span style="color:#1b3a6b">每页 <b>20</b> 条</span><span class="caret" style="border-top:none;border-bottom:4px solid #333;vertical-align:1px;border-left-width:4px;border-right-width:4px"></span></div>
<div class="abs pg dis" style="left:1522px;width:52px">首页</div>
<div class="abs pg dis" style="left:1579px;width:65px">上一页</div>
<div class="abs pg cur" style="left:1649px;width:34px">1</div>
<div class="abs pg " style="left:1688px;width:33px">2</div>
<div class="abs pg " style="left:1726px;width:33px">3</div>
<div class="abs pg " style="left:1764px;width:65px">下一页</div>
<div class="abs pg " style="left:1834px;width:53px">末页</div>
<div id="p2" class="abs"></div>
<table class="g b" style="left:326px;top:591px;width:1577px"><colgroup><col style="width:47px"><col style="width:94px"><col style="width:157px"><col style="width:157px"><col style="width:125px"><col style="width:125px"><col style="width:110px"><col style="width:109px"><col style="width:109px"><col style="width:203px"><col style="width:171px"><col style="width:170px"></colgroup><tr style="height:27px">
<th></th>
<th>操作</th>
<th class="s">仓库<svg class="si" viewBox="0 0 9 12"><path d="M4.500 0.300L9 5.200H0z" fill="#5a5a5a"/><path d="M4.500 11.700L9 6.800H0z" fill="#5a5a5a"/></svg></th>
<th class="s">货位<svg class="si" viewBox="0 0 9 12"><path d="M4.500 0.300L9 5.200H0z" fill="#5a5a5a"/><path d="M4.500 11.700L9 6.800H0z" fill="#5a5a5a"/></svg></th>
<th class="s">实际库存<svg class="si" viewBox="0 0 9 12"><path d="M4.500 0.300L9 5.200H0z" fill="#5a5a5a"/><path d="M4.500 11.700L9 6.800H0z" fill="#5a5a5a"/></svg></th>
<th class="s">动态库存<svg class="si" viewBox="0 0 9 12"><path d="M4.500 0.300L9 5.200H0z" fill="#5a5a5a"/><path d="M4.500 11.700L9 6.800H0z" fill="#5a5a5a"/></svg></th>
<th class="s">供应商<svg class="si" viewBox="0 0 9 12"><path d="M4.500 0.300L9 5.200H0z" fill="#5a5a5a"/><path d="M4.500 11.700L9 6.800H0z" fill="#5a5a5a"/></svg></th>
<th class="s">成 本 价<svg class="si" viewBox="0 0 9 12"><path d="M4.500 0.300L9 5.200H0z" fill="#5a5a5a"/><path d="M4.500 11.700L9 6.800H0z" fill="#5a5a5a"/></svg></th>
<th class="s">成本额<svg class="si" viewBox="0 0 9 12"><path d="M4.500 0.300L9 5.200H0z" fill="#5a5a5a"/><path d="M4.500 11.700L9 6.800H0z" fill="#5a5a5a"/></svg></th>
<th>批次</th>
<th>上次盘点日期</th>
<th>库龄(天)</th>
</tr>
<tr class="even" style="height:24px">
<td class="c m" style="padding:0;line-height:0"><span class="cb" style="position:relative;top:-1px"></span></td>
<td class="m" style="padding:0 0 0 29px;line-height:0"><span style="position:relative;top:-1px"><svg class="ic" width="11" height="13" viewBox="0 0 11 13"><path d="M0.600 0.600h5.900l3.900 3.900v7.900h-9.800z" fill="none" stroke="#983c0c" stroke-width="1"/><path d="M6.300 0.600v4.100h4.100" fill="none" stroke="#983c0c" stroke-width="1"/><path d="M2.600 7.500h5.800M2.600 9.600h5.800" stroke="#983c0c" stroke-width="1"/></svg><span style="display:inline-block;width:9px"></span><svg class="ic" width="16" height="13" viewBox="0 0 16 13"><path d="M11.600 6.600v3a2 2 0 0 1-2 2h-7a2 2 0 0 1-2-2v-7a2 2 0 0 1 2-2h6.600" fill="none" stroke="#983c0c" stroke-width="1"/><path d="M5.300 10l.7-2.700 7-7 2 2-7 7z" fill="#983c0c"/><path d="M6.400 7.700l1.500 1.500" stroke="#fff" stroke-width=".5"/><path d="M12.300 1l2 2" stroke="#fff" stroke-width=".5"/></svg></span></td>
<td></td><td>5A01A</td><td class="r">0</td><td class="r">-2</td><td>供应商A3</td><td class="r">0.0000</td><td class="r">0.00</td><td>180316-0004-0316</td><td></td><td>196</td>
</tr>
<tr class="odd" style="height:24px">
<td class="c m" style="padding:0;line-height:0"><span class="cb" style="position:relative;top:-1px"></span></td>
<td class="m" style="padding:0 0 0 29px;line-height:0"><span style="position:relative;top:-1px"><svg class="ic" width="11" height="13" viewBox="0 0 11 13"><path d="M0.600 0.600h5.900l3.900 3.900v7.900h-9.800z" fill="none" stroke="#983c0c" stroke-width="1"/><path d="M6.300 0.600v4.100h4.100" fill="none" stroke="#983c0c" stroke-width="1"/><path d="M2.600 7.500h5.800M2.600 9.600h5.800" stroke="#983c0c" stroke-width="1"/></svg><span style="display:inline-block;width:9px"></span><svg class="ic" width="16" height="13" viewBox="0 0 16 13"><path d="M11.600 6.600v3a2 2 0 0 1-2 2h-7a2 2 0 0 1-2-2v-7a2 2 0 0 1 2-2h6.600" fill="none" stroke="#983c0c" stroke-width="1"/><path d="M5.300 10l.7-2.700 7-7 2 2-7 7z" fill="#983c0c"/><path d="M6.400 7.700l1.500 1.500" stroke="#fff" stroke-width=".5"/><path d="M12.300 1l2 2" stroke="#fff" stroke-width=".5"/></svg></span></td>
<td>坏货库4(默认)</td><td>货位1</td><td class="r">0</td><td class="r">0</td><td></td><td class="r">100.0000</td><td class="r">0.00</td><td></td><td>2018-01-09 20:14</td><td>0</td>
</tr>
<tr class="even" style="height:24px">
<td class="c m" style="padding:0;line-height:0"><span class="cb" style="position:relative;top:-1px"></span></td>
<td class="m" style="padding:0 0 0 29px;line-height:0"><span style="position:relative;top:-1px"><svg class="ic" width="11" height="13" viewBox="0 0 11 13"><path d="M0.600 0.600h5.900l3.900 3.900v7.900h-9.800z" fill="none" stroke="#983c0c" stroke-width="1"/><path d="M6.300 0.600v4.100h4.100" fill="none" stroke="#983c0c" stroke-width="1"/><path d="M2.600 7.500h5.800M2.600 9.600h5.800" stroke="#983c0c" stroke-width="1"/></svg><span style="display:inline-block;width:9px"></span><svg class="ic" width="16" height="13" viewBox="0 0 16 13"><path d="M11.600 6.600v3a2 2 0 0 1-2 2h-7a2 2 0 0 1-2-2v-7a2 2 0 0 1 2-2h6.600" fill="none" stroke="#983c0c" stroke-width="1"/><path d="M5.300 10l.7-2.700 7-7 2 2-7 7z" fill="#983c0c"/><path d="M6.400 7.700l1.500 1.500" stroke="#fff" stroke-width=".5"/><path d="M12.300 1l2 2" stroke="#fff" stroke-width=".5"/></svg></span></td>
<td>五方门市</td><td>5A01A</td><td class="r">3</td><td class="r">2</td><td>供应商5</td><td class="r">106.0533</td><td class="r">212.11</td><td></td><td></td><td>254</td>
</tr>
<tr class="odd" style="height:24px">
<td class="c m" style="padding:0;line-height:0"><span class="cb" style="position:relative;top:-1px"></span></td>
<td class="m" style="padding:0 0 0 29px;line-height:0"><span style="position:relative;top:-1px"><svg class="ic" width="11" height="13" viewBox="0 0 11 13"><path d="M0.600 0.600h5.900l3.900 3.900v7.900h-9.800z" fill="none" stroke="#983c0c" stroke-width="1"/><path d="M6.300 0.600v4.100h4.100" fill="none" stroke="#983c0c" stroke-width="1"/><path d="M2.600 7.500h5.800M2.600 9.600h5.800" stroke="#983c0c" stroke-width="1"/></svg><span style="display:inline-block;width:9px"></span><svg class="ic" width="16" height="13" viewBox="0 0 16 13"><path d="M11.600 6.600v3a2 2 0 0 1-2 2h-7a2 2 0 0 1-2-2v-7a2 2 0 0 1 2-2h6.600" fill="none" stroke="#983c0c" stroke-width="1"/><path d="M5.300 10l.7-2.700 7-7 2 2-7 7z" fill="#983c0c"/><path d="M6.400 7.700l1.500 1.500" stroke="#fff" stroke-width=".5"/><path d="M12.300 1l2 2" stroke="#fff" stroke-width=".5"/></svg></span></td>
<td>五方门市</td><td>5A01A</td><td class="r">18</td><td class="r">9</td><td>供应商5</td><td class="r">107.8693</td><td class="r">970.82</td><td></td><td>2017-11-03 20:56</td><td>355</td>
</tr>
<tr class="ft" style="height:25px"><td></td><td>所有</td><td></td><td></td><td class="r">21</td><td class="r">9</td><td></td><td></td><td class="r">1,182.93</td><td></td><td></td><td></td></tr>
</table>
<div class="abs" style="left:445px;top:570px;width:112px;height:63px;background:#fff;border:1px solid #ccc;border-radius:4px;box-shadow:0 6px 12px rgba(0,0,0,.175)"></div>
<div class="abs" style="left:460px;top:578px;line-height:20px;font-size:12px;color:#333;white-space:nowrap">调整本店价格</div>
<div class="abs" style="left:460px;top:605px;line-height:20px;font-size:12px;color:#333;white-space:nowrap">调整分店价格</div>
<div class="abs bluebox" style="left:72px;top:49px;width:76px;height:48px"></div>
<div class="abs bluebox" style="left:332px;top:7px;width:79px;height:47px"></div>
<div class="abs bluebox" style="left:6px;top:555px;width:88px;height:66px"></div>
<div class="abs bluebox" style="left:444px;top:566px;width:117px;height:33px"></div>
<div class="abs bluebox" style="left:441px;top:601px;width:120px;height:38px"></div>
<div class="abs note" style="left:723px;top:542.5px">登录总店管理员的账号，此下拉列表中<i>“</i>调整本店价格<i>”</i>，可以设置总店的价格信息；</div>
<div class="abs note" style="left:723px;top:562.5px"><i>“</i>调整分店价格<i>”</i>，可以用总店的价格置其它分店的价格</div>
<svg class="abs" style="left:0;top:0" width="1886" height="862" viewBox="0 0 1886 862"><g fill="#3b5bd3" stroke="none">
<path d="M320.500 32.400 L214 62.200 L164.600 76.700 L162.800 73 L149 84.700 L166.500 87.900 L163.900 84.200 L214 68.100 L320.500 33.400 Z"/>
<path d="M137.500 97 L266.300 300 L355.600 440 L420.500 540.900 L416.600 543 L432 553 L430.200 534.700 L426.300 537.100 L363.200 440 L271.500 300 L138.300 97 Z"/>
<path d="M236.600 732.900 L122.200 619.400 L124.800 616.200 L108.300 610.300 L114 627.200 L117.500 623.700 Z"/>
<path d="M726 562 L582.300 589.800 L580.800 586.100 L567.500 597.600 L584.500 601.500 L583 597.800 Z"/>
</g></svg>
</body></html>
